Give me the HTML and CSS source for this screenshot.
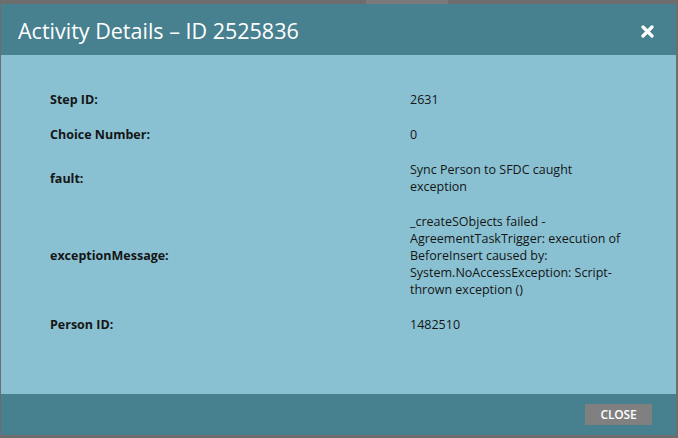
FILE: index.html
```html
<!DOCTYPE html>
<html>
<head>
<meta charset="utf-8">
<link rel="stylesheet" href="styles.css">
</head>
<body>
<div class="backdrop-bar">
  <span class="tab tab-active"></span>
</div>
<div class="dialog">
  <div class="dialog-header">
    <h1 class="dialog-title">Activity Details – ID 2525836</h1>
    <span class="dialog-x">
      <svg width="13" height="13" viewBox="0 0 13 13"><path d="M2 2 L11 11 M11 2 L2 11" stroke="#fff" stroke-width="3.2" stroke-linecap="round"/></svg>
    </span>
  </div>
  <div class="dialog-body">
    <table class="details">
      <tr><th>Step ID:</th><td>2631</td></tr>
      <tr><th>Choice Number:</th><td>0</td></tr>
      <tr><th>fault:</th><td>Sync Person to SFDC caught exception</td></tr>
      <tr><th>exceptionMessage:</th><td>_createSObjects failed - AgreementTaskTrigger: execution of BeforeInsert caused by: System.NoAccessException: Script-thrown exception ()</td></tr>
      <tr><th>Person ID:</th><td>1482510</td></tr>
    </table>
  </div>
  <div class="dialog-footer">
    <button class="btn-close">CLOSE</button>
  </div>
</div>
</body>
</html>
```

FILE: styles.css
```css
html, body {
  margin: 0;
  padding: 0;
}
body {
  background: #6d6d6d;
  width: 678px;
  height: 438px;
  overflow: hidden;
  font-family: "Open Sans", "DejaVu Sans", sans-serif;
}
.backdrop-bar {
  height: 4px;
  display: flex;
  padding-left: 366px;
}
.tab-active {
  width: 82px;
  height: 4px;
  background: #7a7a7a;
}
.dialog {
  margin-left: 1px;
  width: 675px;
  height: 431px;
  display: flex;
  flex-direction: column;
}
.dialog-header {
  background: #47808f;
  height: 51px;
  display: flex;
  align-items: center;
  justify-content: space-between;
  padding: 3px 22px 0 17px;
  box-sizing: border-box;
  flex: none;
}
.dialog-title {
  margin: 0;
  color: #fff;
  font-weight: 400;
  font-size: 21.5px;
  line-height: 26px;
}
.dialog-x {
  display: flex;
  width: 13px;
  height: 13px;
}
.dialog-body {
  background: #89c1d3;
  flex: 1;
  padding: 27px 0 0 49px;
}
.details {
  border-collapse: collapse;
  font-size: 12.5px;
  line-height: 17px;
  color: #151515;
}
.details th {
  text-align: left;
  font-weight: 700;
  width: 360px;
  padding: 9px 0;
  vertical-align: middle;
}
.details td {
  width: 214px;
  padding: 9px 0;
  vertical-align: middle;
}
.dialog-footer {
  background: #47808f;
  height: 41px;
  flex: none;
  display: flex;
  align-items: center;
  justify-content: flex-end;
  padding-right: 24px;
}
.btn-close {
  background: #808080;
  border: none;
  color: #fff;
  font-family: "Open Sans", "DejaVu Sans", sans-serif;
  font-size: 12px;
  font-weight: 600;
  width: 67px;
  height: 21px;
  padding: 0;
  line-height: 21px;
  letter-spacing: -0.2px;
}
```
